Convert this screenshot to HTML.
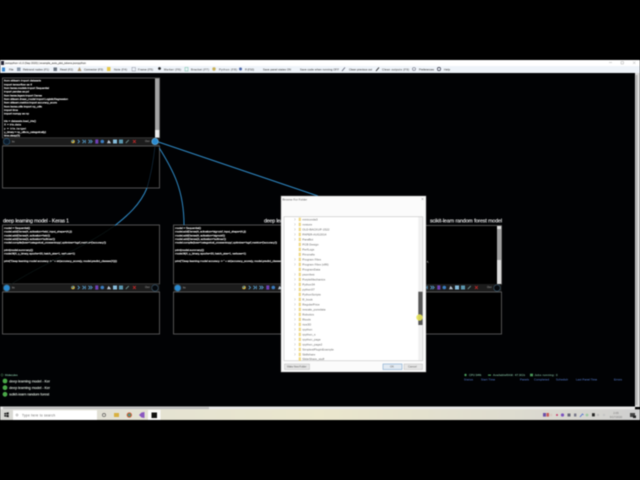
<!DOCTYPE html>
<html><head><meta charset="utf-8"><style>
html,body{margin:0;padding:0;background:#000;width:640px;height:480px;overflow:hidden}
svg{display:block;filter:blur(.4px)}
text{font-family:"Liberation Sans",sans-serif}
.c{font-size:3px;fill:#ececec;stroke:#ececec;stroke-width:.12}
.p{fill:#000;stroke:#666;stroke-width:.8}
.h{font-size:5.2px;fill:#f0f0f0;stroke:#f0f0f0;stroke-width:.12}
.m{font-size:3.6px;fill:#dfe8df;stroke:#dfe8df;stroke-width:.08}
.s{font-size:2.7px;fill:#4a6ab0;stroke:#4a6ab0;stroke-width:.08}
.g{font-size:2.8px;fill:#7ab094;stroke:#7ab094;stroke-width:.08}
.b{font-size:2.7px;fill:#555;stroke:#555;stroke-width:.07}
</style></head><body>
<svg width="640" height="480" viewBox="0 0 640 480" xmlns="http://www.w3.org/2000/svg">
<defs>
<g id="row">
<rect x="2.5" y="138" width="157" height="8" fill="#1c1c1c"/>
<text x="12" y="142.5" style="font-size:3px;fill:#ccc">In</text>
<circle cx="73" cy="141.5" r="1.8" fill="#d8b840"/><circle cx="72.6" cy="141" r="1" fill="#3d78a8"/>
<path d="M77.8 139.8l1.7 1.7-1.7 1.7" fill="none" stroke="#5aa6d8" stroke-width=".8"/>
<path d="M82.5 139.8l1.7 1.7-1.7 1.7M85.3 139.8v3.4" fill="none" stroke="#5aa6d8" stroke-width=".8"/>
<path d="M88.5 139.8l1.7 1.7-1.7 1.7M90.5 139.8l1.7 1.7-1.7 1.7" fill="none" stroke="#5aa6d8" stroke-width=".8"/>
<rect x="95.3" y="139.4" width="3" height="4.2" fill="#7040b8"/>
<circle cx="102.3" cy="141.5" r="1.8" fill="#3a7cc0"/>
<path d="M107 143.3l1.5-3.4 1.5 1.6 1 1.8z" fill="#b8c4d0"/>
<rect x="113" y="139.5" width="4" height="4" fill="#86bcdc"/>
<rect x="119" y="139.5" width="4" height="4" fill="#5a98b0"/>
<path d="M125.8 143l3-3" stroke="#6a8a8a" stroke-width=".9"/>
<path d="M133 140l2.8 3M135.8 140l-2.8 3" stroke="#c02828" stroke-width=".9"/>
<text x="145" y="142" style="font-size:2.8px;fill:#aaa">Out</text>
</g>
<g id="fold"><rect x="-1" y="-1.7" width="2.2" height="3.4" fill="#f0d880"/></g>
<g id="tw"><path d="M-.6 -1l1.1 1-1.1 1" fill="none" stroke="#999" stroke-width=".4"/></g>
</defs>

<rect width="640" height="480" fill="#000"/>
<!-- window -->
<rect x="0" y="60" width="640" height="6" fill="#fff"/>
<rect x="0" y="66" width="640" height="7" fill="#eef3f9"/>
<rect x="0" y="73" width="635" height="334" fill="#010204"/>
<rect x="635" y="73" width="5" height="334" fill="#dcdcdc"/>
<rect x="635.5" y="75" width="2" height="330" fill="#b4b4b4"/>
<rect x="0" y="406.5" width="635" height="3" fill="#e8e8e8"/>
<rect x="3" y="407" width="206" height="2.2" fill="#bdbdbd"/>

<rect x="1" y="61" width="3" height="4" fill="#223"/>
<text x="5" y="64" class="b">jsonpython v1.0 (Sep 2020) | example_auto_plot_tokens.jsonpython</text>
<path d="M609 62.5h3M621 61.5h2.5v2.5h-2.5zM633 61.5l2.5 2.5M635.5 61.5l-2.5 2.5" fill="none" stroke="#999" stroke-width=".4"/>

<g>
<rect x="2" y="67.5" width="3" height="4" fill="#3a88d0"/>
<text class="b" x="9" y="70.5">File</text>
<rect x="17" y="67.5" width="3.5" height="3.5" fill="#8a98a8"/>
<text class="b" x="23" y="70.5" textLength="26">Rebrand nodes (F1)</text>
<rect x="53.5" y="67.5" width="3.5" height="3.5" fill="#6a7480"/>
<text class="b" x="60" y="70.5" textLength="13">Read (F2)</text>
<path d="M77.5 71l2-4 2 4z" fill="#b09870"/>
<text class="b" x="84" y="70.5" textLength="19">Connector (F3)</text>
<rect x="107" y="67" width="3.5" height="4" fill="#e8c848"/>
<text class="b" x="114" y="70.5" textLength="13">Note (F4)</text>
<rect x="132" y="67.5" width="3.5" height="3.5" fill="none" stroke="#556" stroke-width=".5" stroke-dasharray=".8 .5"/>
<text class="b" x="138" y="70.5" textLength="15">Frame (F5)</text>
<circle cx="159.5" cy="68.5" r="1.4" fill="#222"/>
<text class="b" x="164" y="70.5" textLength="17">Marker (F6)</text>
<rect x="185" y="67.5" width="3" height="3.5" fill="none" stroke="#6cc0a0" stroke-width=".5"/>
<text class="b" x="191" y="70.5" textLength="18">Bracket (F7)</text>
<circle cx="214" cy="69" r="1.7" fill="#c8b058"/>
<text class="b" x="219" y="70.5" textLength="18">Python (F8)</text>
<circle cx="240.5" cy="69" r="1.5" fill="#4a64a8"/>
<text class="b" x="245" y="70.5" textLength="9">R (F10)</text>
<text class="b" x="263" y="70.5" textLength="28">Save panel states ON</text>
<text class="b" x="300" y="70.5" textLength="39">Save code when running OFF</text>
<path d="M342 71l3-3.5" stroke="#556" stroke-width=".7"/>
<text class="b" x="349" y="70.5" textLength="23">Clean previous out</text>
<path d="M376 71l3-3.5" stroke="#222" stroke-width=".9"/>
<text class="b" x="382" y="70.5" textLength="27">Clean outputs (F9)</text>
<circle cx="414" cy="69" r="1.5" fill="none" stroke="#667" stroke-width=".6"/>
<text class="b" x="419" y="70.5" textLength="15">Preferences</text>
<circle cx="439" cy="69" r="1.6" fill="none" stroke="#334" stroke-width=".7"/>
<text class="b" x="444" y="70.5" textLength="6">Help</text>
</g>

<!-- panel 1 -->
<rect class="p" x="2.5" y="78" width="157" height="60"/>
<rect x="155" y="78.5" width="4.3" height="59" fill="#a4a4a4"/>
<rect x="155" y="130" width="4.3" height="7.5" fill="#ececec"/>
<g class="c">
<text x="4" y="81.7" textLength="37">from sklearn import datasets</text>
<text x="4" y="85.3" textLength="28">import tensorflow as tf</text>
<text x="4" y="89" textLength="45">from keras.models import Sequential</text>
<text x="4" y="92.7" textLength="25">import pandas as pd</text>
<text x="4" y="96.3" textLength="38">from keras.layers import Dense</text>
<text x="4" y="100" textLength="64">from sklearn.linear_model import LogisticRegression</text>
<text x="4" y="103.7" textLength="53">from sklearn.metrics import accuracy_score</text>
<text x="4" y="107.3" textLength="38">from keras.utils import np_utils</text>
<text x="4" y="111" textLength="14">import time</text>
<text x="4" y="114.7" textLength="25">import numpy as np</text>
<text x="4" y="122" textLength="32">iris   = datasets.load_iris()</text>
<text x="4" y="125.7" textLength="17">X      = iris.data</text>
<text x="4" y="129.3" textLength="22">y      = iris.target</text>
<text x="4" y="133" textLength="42">y_binary = np_utils.to_categorical(y)</text>
<text x="4" y="136.7" textLength="16">time.sleep(5)</text>
</g>
<use href="#row"/>
<rect class="p" x="2.5" y="146" width="157" height="42"/>
<circle cx="6.7" cy="141.5" r="3.1" fill="#0a1a2a" stroke="#2e5a7a" stroke-width=".6"/>
<circle cx="155" cy="141.5" r="3.2" fill="#2a8ad0" stroke="#6ab0d8" stroke-width=".7"/>

<!-- panel 2 -->
<text x="3" y="222.5" class="h" textLength="66">deep learning model - Keras 1</text>
<rect class="p" x="2.5" y="225" width="157" height="59"/>
<g class="c">
<text x="4" y="229" textLength="26">model = Sequential()</text>
<text x="4" y="232.7" textLength="68">model.add(Dense(4, activation='relu', input_shape=(4,)))</text>
<text x="4" y="236.3" textLength="46">model.add(Dense(4, activation='relu'))</text>
<text x="4" y="240" textLength="51">model.add(Dense(3, activation='softmax'))</text>
<text x="4" y="243.7" textLength="102">model.compile(loss='categorical_crossentropy',optimizer='sgd',metrics=['accuracy'])</text>
<text x="4" y="251" textLength="29">print(model.summary())</text>
<text x="4" y="254.7" textLength="71">model.fit(X, y_binary, epochs=20, batch_size=1, verbose=1)</text>
<text x="4" y="262" textLength="113">print("Deep learning model accuracy -> " + str(accuracy_score(y, model.predict_classes(X))))</text>
</g>
<use href="#row" y="146"/>
<rect class="p" x="2.5" y="292" width="157" height="42"/>
<circle cx="6.7" cy="288" r="3.1" fill="#2a8ad0" stroke="#3a6a8a" stroke-width=".7"/>
<circle cx="155" cy="288" r="3.2" fill="#05080c" stroke="#3a5a70" stroke-width=".6"/>

<!-- panel 3 -->
<text x="264" y="222.5" class="h" textLength="66">deep learning model - Keras 2</text>
<rect class="p" x="173.5" y="225" width="157" height="59"/>
<g class="c">
<text x="175" y="229" textLength="26">model = Sequential()</text>
<text x="175" y="232.7" textLength="71">model.add(Dense(4, activation='sigmoid', input_shape=(4,)))</text>
<text x="175" y="236.3" textLength="50">model.add(Dense(4, activation='sigmoid'))</text>
<text x="175" y="240" textLength="51">model.add(Dense(3, activation='softmax'))</text>
<text x="175" y="243.7" textLength="102">model.compile(loss='categorical_crossentropy',optimizer='sgd',metrics=['accuracy'])</text>
<text x="175" y="251" textLength="29">print(model.summary())</text>
<text x="175" y="254.7" textLength="71">model.fit(X, y_binary, epochs=20, batch_size=1, verbose=1)</text>
<text x="175" y="262" textLength="113">print("Deep learning model accuracy -> " + str(accuracy_score(y, model.predict_classes(X))))</text>
</g>
<use href="#row" x="171" y="146"/>
<rect class="p" x="173.5" y="292" width="157" height="42"/>
<circle cx="177.7" cy="288" r="3.1" fill="#2a8ad0" stroke="#3a6a8a" stroke-width=".7"/>
<circle cx="326" cy="288" r="3.2" fill="#05080c" stroke="#3a5a70" stroke-width=".6"/>

<!-- panel 4 -->
<text x="430" y="222.5" class="h" textLength="72">scikit-learn random forest model</text>
<rect class="p" x="344.5" y="225.5" width="157" height="59"/>
<rect x="497" y="226" width="4.3" height="58" fill="#dcdcdc"/>
<rect x="497" y="229" width="4.3" height="31" fill="#a0a0a0"/>
<text x="427" y="262.5" class="c">r,</text>
<use href="#row" x="342" y="146"/>
<rect class="p" x="344.5" y="292" width="157" height="42"/>
<circle cx="497" cy="288" r="3.2" fill="#05080c" stroke="#3a5a70" stroke-width=".6"/>

<!-- connections -->
<path d="M158.5 142L318 196" fill="none" stroke="#2f8ac6" stroke-width="1"/>
<path d="M159.3 148C173 170 184 190 184 225" fill="none" stroke="#2f8ac6" stroke-width="1"/>
<path d="M147 188C140 205 127 216 115 225.5" fill="none" stroke="#2f8ac6" stroke-width="1"/>
<path d="M155 146C153 165 150 178 147 188" fill="none" stroke="#16334a" stroke-width=".6"/>
<path d="M115 225.5C80 250 40 265 10 285" fill="none" stroke="#122" stroke-width=".5"/>

<!-- dialog -->
<rect x="281" y="196" width="145" height="176" fill="#fbfbfb" stroke="#999" stroke-width=".4"/>
<text x="282.5" y="200.5" style="font-size:3px;fill:#555">Browse For Folder</text>
<path d="M421.5 198l2 2M423.5 198l-2 2" stroke="#888" stroke-width=".4"/>
<rect x="284" y="216.7" width="138.7" height="144" fill="#fff" stroke="#b8b8b8" stroke-width=".5"/>
<rect x="418.3" y="217" width="4.2" height="143.5" fill="#f0f0f0"/>
<rect x="418.3" y="291.7" width="4.2" height="33.3" fill="#555"/>
<g style="font-size:3px;fill:#666">
<text x="302.3" y="220.4">miniconda3</text>
<text x="302.3" y="225.4">nvstore</text>
<text x="302.3" y="230.4">OLD-BACKUP-1522</text>
<text x="302.3" y="235.4">PAPER-AUG2014</text>
<text x="302.3" y="240.4">ParaBot</text>
<text x="302.3" y="245.4">PCB Design</text>
<text x="302.3" y="250.4">PerfLogs</text>
<text x="302.3" y="255.4">Pimcrafts</text>
<text x="302.3" y="260.4">Program Files</text>
<text x="302.3" y="265.4">Program Files (x86)</text>
<text x="302.3" y="270.4">ProgramData</text>
<text x="302.3" y="275.4">psomfest</text>
<text x="302.3" y="280.4">PurpleMechanics</text>
<text x="302.3" y="285.4">Python34</text>
<text x="302.3" y="290.4">python37</text>
<text x="302.3" y="295.4">PythonScripts</text>
<text x="302.3" y="300.4">R_book</text>
<text x="302.3" y="305.4">RegularPrice</text>
<text x="302.3" y="310.4">rescale_puredata</text>
<text x="302.3" y="315.4">Robotics</text>
<text x="302.3" y="320.4">Rtools</text>
<text x="302.3" y="325.4">rtos3D</text>
<text x="302.3" y="330.4">rpython</text>
<text x="302.3" y="335.4">rpython_s</text>
<text x="302.3" y="340.4">rpython_page</text>
<text x="302.3" y="345.4">rpython_page2</text>
<text x="302.3" y="350.4">SimplestPluginExample</text>
<text x="302.3" y="355.4">Skillshare</text>
<text x="302.3" y="360.2">SlideShare_stuff</text>
</g>
<g>
<use href="#fold" x="299.7" y="219.4"/><use href="#fold" x="299.7" y="224.4"/><use href="#fold" x="299.7" y="229.4"/><use href="#fold" x="299.7" y="234.4"/><use href="#fold" x="299.7" y="239.4"/><use href="#fold" x="299.7" y="244.4"/><use href="#fold" x="299.7" y="249.4"/><use href="#fold" x="299.7" y="254.4"/><use href="#fold" x="299.7" y="259.4"/><use href="#fold" x="299.7" y="264.4"/><use href="#fold" x="299.7" y="269.4"/><use href="#fold" x="299.7" y="274.4"/><use href="#fold" x="299.7" y="279.4"/><use href="#fold" x="299.7" y="284.4"/><use href="#fold" x="299.7" y="289.4"/><use href="#fold" x="299.7" y="294.4"/><use href="#fold" x="299.7" y="299.4"/><use href="#fold" x="299.7" y="304.4"/><use href="#fold" x="299.7" y="309.4"/><use href="#fold" x="299.7" y="314.4"/><use href="#fold" x="299.7" y="319.4"/><use href="#fold" x="299.7" y="324.4"/><use href="#fold" x="299.7" y="329.4"/><use href="#fold" x="299.7" y="334.4"/><use href="#fold" x="299.7" y="339.4"/><use href="#fold" x="299.7" y="344.4"/><use href="#fold" x="299.7" y="349.4"/><use href="#fold" x="299.7" y="354.4"/><use href="#fold" x="299.7" y="359"/>
<use href="#tw" x="295" y="219.4"/><use href="#tw" x="295" y="224.4"/><use href="#tw" x="295" y="229.4"/><use href="#tw" x="295" y="234.4"/><use href="#tw" x="295" y="239.4"/><use href="#tw" x="295" y="259.4"/><use href="#tw" x="295" y="264.4"/><use href="#tw" x="295" y="274.4"/><use href="#tw" x="295" y="279.4"/><use href="#tw" x="295" y="284.4"/><use href="#tw" x="295" y="289.4"/><use href="#tw" x="295" y="299.4"/><use href="#tw" x="295" y="304.4"/><use href="#tw" x="295" y="309.4"/><use href="#tw" x="295" y="314.4"/><use href="#tw" x="295" y="319.4"/><use href="#tw" x="295" y="324.4"/><use href="#tw" x="295" y="329.4"/><use href="#tw" x="295" y="334.4"/><use href="#tw" x="295" y="339.4"/><use href="#tw" x="295" y="344.4"/><use href="#tw" x="295" y="349.4"/><use href="#tw" x="295" y="354.4"/>
</g>
<rect x="284.5" y="364" width="25" height="5.5" fill="#e6e6e6" stroke="#b0b0b0" stroke-width=".4"/>
<text x="287" y="367.7" style="font-size:2.8px;fill:#666" textLength="19.5">Make New Folder</text>
<rect x="383" y="364" width="19" height="5.5" fill="#e2eaf2" stroke="#6a9ac8" stroke-width=".5"/>
<text x="390" y="367.7" style="font-size:2.8px;fill:#666">OK</text>
<rect x="404" y="364" width="18.5" height="5.5" fill="#e6e6e6" stroke="#b0b0b0" stroke-width=".4"/>
<text x="408" y="367.7" style="font-size:2.8px;fill:#666">Cancel</text>
<circle cx="419.5" cy="317.5" r="3.2" fill="#e6e25a" opacity=".9"/>

<!-- macros -->
<circle cx="2" cy="375" r="1.1" fill="none" stroke="#5a9a6a" stroke-width=".4"/>
<text x="5" y="376.2" class="g">Molecules</text>
<circle cx="5" cy="381" r="2.4" fill="#4aa848"/><text x="9.3" y="382.3" class="m" textLength="40.7">deep learning model - Ker</text>
<circle cx="5" cy="387.7" r="2.4" fill="#4aa848"/><text x="9.3" y="389" class="m" textLength="40.7">deep learning model - Ker</text>
<circle cx="5" cy="394.3" r="2.4" fill="#4aa848"/><text x="9.3" y="395.6" class="m" textLength="40">scikit-learn random forest</text>

<!-- status -->
<circle cx="465.5" cy="375" r="1.2" fill="#4a9a5a"/>
<text x="469" y="376.2" class="g">CPU  34%</text>
<rect x="488" y="374.5" width="3" height="1.2" fill="#4a9a5a"/>
<text x="493" y="376.2" class="g" textLength="32">AvailableRAM: 47.9Gb</text>
<rect x="530" y="373.7" width="3" height="2.6" fill="#4a9a5a"/>
<text x="534.5" y="376.2" class="g" textLength="23">Jobs running: 0</text>
<text x="464" y="380.5" class="s" textLength="9">Status</text>
<text x="481" y="380.5" class="s" textLength="14">Start Time</text>
<text x="520" y="380.5" class="s" textLength="9">Panels</text>
<text x="534" y="380.5" class="s" textLength="15">Completed</text>
<text x="556" y="380.5" class="s" textLength="12">Schedulr</text>
<text x="576" y="380.5" class="s" textLength="21">Last Panel Time</text>
<text x="614" y="380.5" class="s" textLength="8">Errors</text>

<!-- taskbar -->
<defs><linearGradient id="tb" x1="0" x2="1" y1="0" y2="0">
<stop offset="0" stop-color="#d8d8d4"/><stop offset=".2" stop-color="#e4e2d4"/><stop offset=".5" stop-color="#ebe7cd"/><stop offset=".8" stop-color="#dedcd0"/><stop offset="1" stop-color="#cfcfcf"/></linearGradient></defs>
<rect x="0" y="409.3" width="640" height="10.7" fill="url(#tb)"/>
<path d="M4.3 413l1.7-.3v1.8h-1.7zM6.4 412.6l2.3-.4v2.3h-2.3zM4.3 415h1.7v1.8l-1.7-.3zM6.4 415h2.3v2.3l-2.3-.4z" fill="#1a1a1a"/>
<rect x="13" y="410.3" width="84" height="9.7" fill="#fff"/>
<circle cx="17" cy="415" r="1" fill="none" stroke="#666" stroke-width=".4"/>
<text x="22" y="416.3" style="font-size:3.2px;fill:#666" textLength="33">Type here to search</text>
<circle cx="104" cy="415" r="1.6" fill="none" stroke="#444" stroke-width=".6"/>
<rect x="114" y="413" width="5" height="4" fill="#d8b040"/>
<circle cx="129.3" cy="415" r="2.6" fill="#d84a3a"/><circle cx="129.3" cy="415" r="1.8" fill="#6a9a4a"/><circle cx="129.3" cy="415" r=".9" fill="#4a7ad0"/>
<path d="M139 415l2.5-2.5 3-.5v6l-3-.5z" fill="#8a58c0"/>
<rect x="148" y="410" width="12.5" height="10" fill="#fbfbfb"/>
<rect x="151.5" y="412.5" width="5.5" height="5.5" fill="#111"/>
<rect x="543" y="413" width="3" height="3.6" fill="#6a50a8"/><rect x="546.5" y="413" width="2.5" height="3.6" fill="#c85a5a"/>
<circle cx="551" cy="415" r="1.4" fill="#d8c8c0"/>
<circle cx="557" cy="415" r="1" fill="#c83a6a"/>
<circle cx="562.5" cy="415" r="1.6" fill="#7a50c0"/>
<rect x="567.5" y="413.5" width="3" height="3" fill="#667"/>
<rect x="574" y="413.5" width="2.4" height="3" fill="#778"/>
<path d="M580 417l2.5-3 1 1" stroke="#4a6ad0" stroke-width=".8" fill="none"/>
<circle cx="587" cy="415" r="1.4" fill="#9ac8a0"/>
<rect x="592" y="413.2" width="2.8" height="3.2" fill="#222"/>
<circle cx="598" cy="415" r="1.2" fill="#bbb"/><circle cx="604" cy="415" r="1.2" fill="#c4c4c4"/>
<text x="616" y="414" style="font-size:2.8px;fill:#777" text-anchor="middle">2:05</text>
<text x="616" y="418" style="font-size:2.8px;fill:#777" text-anchor="middle">9/17/2020</text>
<rect x="630" y="413" width="5" height="4" fill="#444"/><rect x="633" y="415.5" width="3" height="2.5" fill="#222"/>
</svg>
</body></html>
